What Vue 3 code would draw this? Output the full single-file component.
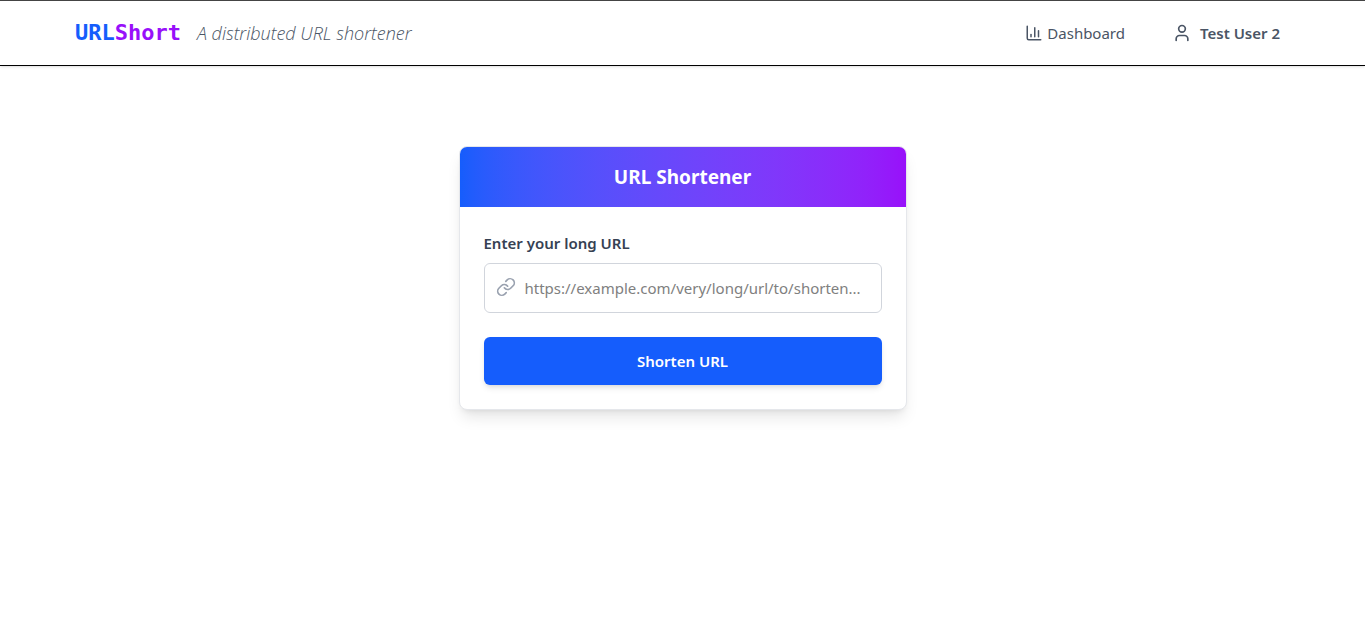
<script setup>
import { ref } from 'vue'

const longUrl = ref('')
</script>

<template>
  <div class="page">
    <header class="topbar">
      <div class="brand">
        <a class="logo" href="#"><span class="logo-url">URL</span><span class="logo-short">Short</span></a>
        <p class="tagline">A distributed URL shortener</p>
      </div>
      <nav class="nav">
        <a class="dashboard" href="#">
          <svg class="icon icon-small" viewBox="0 0 24 24" aria-hidden="true">
            <path d="M3 3v16a2 2 0 0 0 2 2h16" />
            <path d="M18 17V9" />
            <path d="M13 17V5" />
            <path d="M8 17v-3" />
          </svg>
          <span>Dashboard</span>
        </a>
        <button class="user" type="button">
          <svg class="icon" viewBox="0 0 24 24" aria-hidden="true">
            <path d="M19 21v-2a4 4 0 0 0-4-4H9a4 4 0 0 0-4 4v2" />
            <circle cx="12" cy="7" r="4" />
          </svg>
          <span>Test User 2</span>
        </button>
      </nav>
    </header>

    <main class="main">
      <section class="card">
        <h1 class="card-title">URL Shortener</h1>
        <form class="form" @submit.prevent>
          <label class="label" for="long-url">Enter your long URL</label>
          <div class="field">
            <svg class="icon field-icon" viewBox="0 0 24 24" aria-hidden="true">
              <path d="M10 13a5 5 0 0 0 7.54.54l3-3a5 5 0 0 0-7.07-7.07l-1.72 1.71" />
              <path d="M14 11a5 5 0 0 0-7.54-.54l-3 3a5 5 0 0 0 7.07 7.07l1.71-1.71" />
            </svg>
            <input
              id="long-url"
              v-model="longUrl"
              class="input"
              type="url"
              placeholder="https://example.com/very/long/url/to/shorten..."
            />
          </div>
          <button class="submit" type="submit">Shorten URL</button>
        </form>
      </section>
    </main>
  </div>
</template>

<style>
body {
  background: #fff;
}
</style>

<style scoped>
.page,
.page * {
  box-sizing: border-box;
}

.page {
  font-family: "Segoe UI", "Noto Sans", sans-serif;
  font-size: 15px;
  line-height: 24px;
  color: #364153;
}

.topbar {
  display: flex;
  align-items: center;
  justify-content: space-between;
  padding: 12px 75px;
  border-top: 1px solid #444;
  border-bottom: 1px solid #000;
  box-shadow: 0 1px 3px rgba(0, 0, 0, 0.1), 0 1px 2px -1px rgba(0, 0, 0, 0.1);
}

.brand {
  display: flex;
  align-items: baseline;
  gap: 16px;
}

.logo {
  font-family: Consolas, "DejaVu Sans Mono", monospace;
  font-size: 22px;
  line-height: 32px;
  font-weight: 700;
  text-decoration: none;
}

.logo-url {
  color: #155dfc;
}

.logo-short {
  color: #9810fa;
}

.tagline {
  margin: 0;
  font-family: "Segoe UI", "Open Sans", sans-serif;
  font-size: 18px;
  line-height: 28px;
  font-style: italic;
  font-weight: 300;
  color: #4a5565;
}

.nav {
  display: flex;
  align-items: center;
  gap: 35px;
}

.icon {
  display: block;
  flex: none;
  width: 20px;
  height: 20px;
  fill: none;
  stroke: currentColor;
  stroke-width: 2;
  stroke-linecap: round;
  stroke-linejoin: round;
}

.icon-small {
  width: 18px;
  height: 18px;
}

.dashboard {
  display: flex;
  align-items: center;
  gap: 4px;
  color: #4a5565;
  text-decoration: none;
}

.user {
  display: flex;
  align-items: center;
  gap: 8px;
  padding: 8px 10px 8px 12px;
  border: 0;
  background: transparent;
  font: inherit;
  font-weight: 600;
  color: #4a5565;
}

.main {
  display: flex;
  justify-content: center;
  padding: 80px 16px;
}

.card {
  width: 100%;
  max-width: 448px;
  overflow: hidden;
  border: 1px solid #e5e7eb;
  border-radius: 8px;
  background: #fff;
  box-shadow: 0 10px 15px -3px rgba(0, 0, 0, 0.1), 0 4px 6px -4px rgba(0, 0, 0, 0.1);
}

.card-title {
  margin: 0;
  padding: 16px 24px;
  background: linear-gradient(to right in oklab, #155dfc, #9810fa);
  font-size: 19px;
  line-height: 28px;
  font-weight: 700;
  text-align: center;
  color: #fff;
}

.form {
  display: flex;
  flex-direction: column;
  padding: 24px;
}

.label {
  margin-bottom: 8px;
  font-weight: 600;
}

.field {
  position: relative;
  margin-bottom: 24px;
}

.field-icon {
  position: absolute;
  top: 14px;
  left: 12px;
  color: #99a1af;
}

.input {
  display: block;
  width: 100%;
  padding: 12px 12px 12px 40px;
  border: 1px solid #d1d5dc;
  border-radius: 6px;
  background: transparent;
  font: inherit;
  color: #364153;
}

.input::placeholder {
  color: #808080;
  opacity: 1;
}

.submit {
  padding: 12px 16px;
  border: 0;
  border-radius: 6px;
  background: #155dfc;
  box-shadow: 0 4px 6px -1px rgba(0, 0, 0, 0.1), 0 2px 4px -2px rgba(0, 0, 0, 0.1);
  font: inherit;
  font-weight: 600;
  color: #fff;
}
</style>
